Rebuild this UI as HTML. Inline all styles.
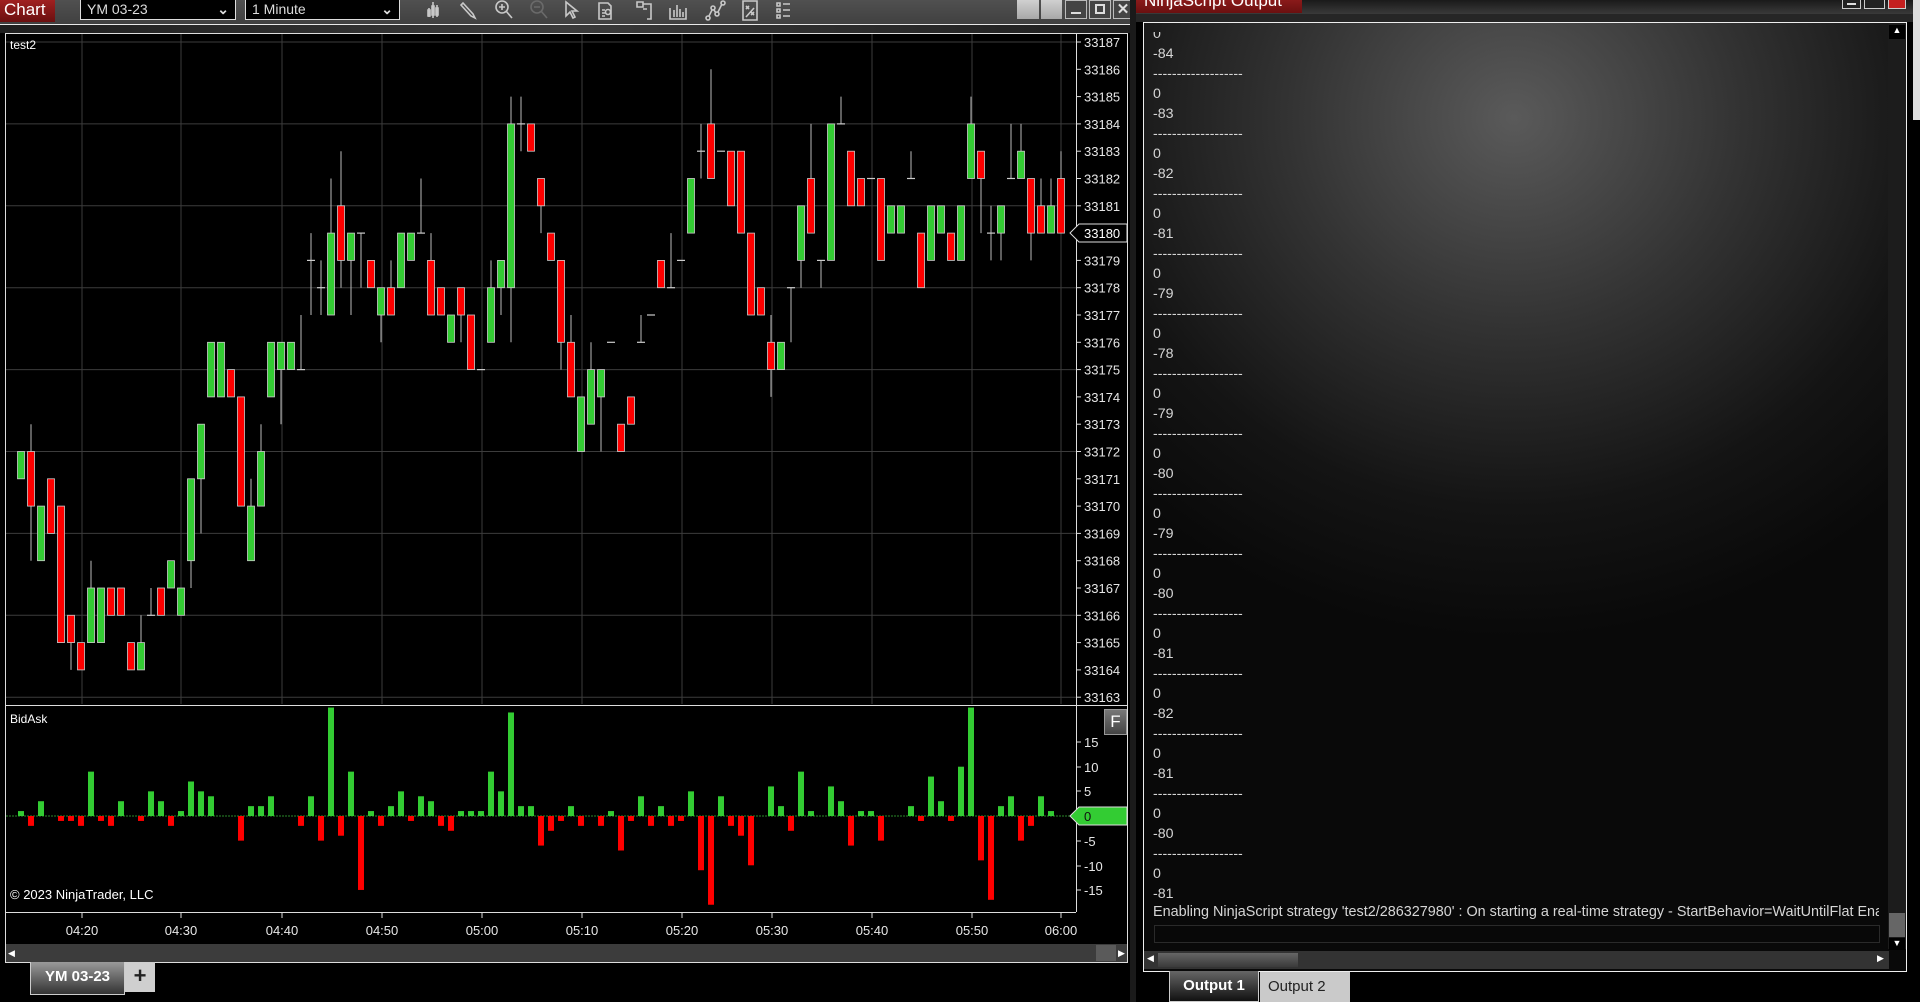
<!DOCTYPE html>
<html><head><meta charset="utf-8">
<style>
*{margin:0;padding:0;box-sizing:border-box}
body{width:1920px;height:1002px;background:#000;overflow:hidden;position:relative;font-family:"Liberation Sans",sans-serif}
.abs{position:absolute}
</style></head><body>
<!-- left toolbar -->
<div class="abs" style="left:0;top:0;width:1130px;height:24px;background:linear-gradient(#505050,#404040)"></div>
<div class="abs" style="left:0;top:24px;width:1130px;height:1px;background:#e8e8e8"></div>
<div class="abs" style="left:0;top:25px;width:1130px;height:8px;background:linear-gradient(90deg,#1e1e1e,#3a3a3a 50%,#1e1e1e)"></div>
<div class="abs" style="left:0;top:0;width:55px;height:22px;background:linear-gradient(#a02020,#6a1010);color:#fff;font-size:17px;line-height:20px;padding-left:4px">Chart</div>
<div class="abs" style="left:80px;top:0;width:156px;height:20px;background:#000;border:1px solid #ddd;border-top:none;color:#ddd;font-size:14px;line-height:18px;padding-left:6px">YM 03-23<span style="position:absolute;right:6px;top:0;font-weight:bold">&#8964;</span></div>
<div class="abs" style="left:245px;top:0;width:155px;height:20px;background:#000;border:1px solid #ddd;border-top:none;color:#ddd;font-size:14px;line-height:18px;padding-left:6px">1 Minute<span style="position:absolute;right:6px;top:0;font-weight:bold">&#8964;</span></div>
<svg class="abs" style="left:410px;top:0" width="380" height="22" viewBox="0 0 380 22" fill="none" stroke="#c8c8c8" stroke-width="1.6">
 <g transform="translate(17,0)"><path d="M2 8v9M6 2v16M10 5v12M1 10h2v6H1zM5 6h2v9H5zM9 8h2v7H9z"/></g>
 <g transform="translate(50,0)"><path d="M3 3l10 11 2 4-4-2L1 5z"/></g>
 <g transform="translate(85,0)"><circle cx="7" cy="7" r="6"/><path d="M7 4v6M4 7h6M11 11l6 7"/></g>
 <g transform="translate(120,0)" stroke="#6a6a6a"><circle cx="7" cy="7" r="6"/><path d="M4 7h6M11 11l6 7"/></g>
 <g transform="translate(153,0)"><path d="M3 2v14l4-4 3 6 2-1-3-6h5z"/></g>
 <g transform="translate(187,0)"><path d="M2 3h9l3 3v13H2zM5 10h3M5 13h3M5 16h3"/><circle cx="11" cy="12" r="2.5"/></g>
 <g transform="translate(225,0)"><path d="M2 2h6v5H2zM8 4h8v15h-4M8 9h4"/></g>
 <g transform="translate(258,0)"><path d="M2 8v11h16V8M6 17V10M9 17V5M12 17V9M15 17V12"/></g>
 <g transform="translate(295,0)"><circle cx="3" cy="18" r="2"/><circle cx="8" cy="8" r="2"/><circle cx="12" cy="14" r="2"/><circle cx="18" cy="3" r="2"/><path d="M4 16l3-6M9 10l2 3M13 12l4-8"/></g>
 <g transform="translate(330,0)"><path d="M3 1h14v19H3zM6 6l3 3M9 6l-3 3M11 12l3 3M14 12l-3 3M6 17l8-9"/></g>
 <g transform="translate(365,0)"><path d="M2 3h3v3H2zM2 9h3v3H2zM2 15h3v3H2zM8 4h10M8 10h10M8 16h10"/></g>
</svg>
<div class="abs" style="left:1017px;top:0;width:22px;height:19px;background:linear-gradient(#d0d0d0,#a8a8a8)"></div>
<div class="abs" style="left:1041px;top:0;width:21px;height:19px;background:linear-gradient(#d0d0d0,#a8a8a8)"></div>
<div class="abs" style="left:1065px;top:0;width:22px;height:19px;border:1px solid #bbb;background:#444"><div style="position:absolute;left:5px;top:11px;width:10px;height:2px;background:#ddd"></div></div>
<div class="abs" style="left:1089px;top:0;width:22px;height:19px;border:1px solid #bbb;background:#444"><div style="position:absolute;left:5px;top:3px;width:10px;height:10px;border:2px solid #ddd"></div></div>
<div class="abs" style="left:1113px;top:0;width:20px;height:19px;border:1px solid #bbb;background:#444;color:#ddd;font-weight:bold;font-size:15px;line-height:17px;text-align:center">✕</div>

<!-- chart frame -->
<div class="abs" style="left:5px;top:33px;width:1123px;height:930px;border:1px solid #ddd"></div>
<svg class="abs" style="left:0;top:0" width="1130" height="1002" id="chart" font-family="Liberation Sans, sans-serif"></svg>
<div class="abs" style="left:10px;top:38px;color:#fff;font-size:12px">test2</div>
<div class="abs" style="left:10px;top:712px;color:#fff;font-size:12px">BidAsk</div>
<div class="abs" style="left:10px;top:887px;color:#fff;font-size:13px">© 2023 NinjaTrader, LLC</div>
<div class="abs" style="left:1104px;top:709px;width:23px;height:26px;background:linear-gradient(#777,#444);border:1px solid #999;color:#fff;font-size:17px;line-height:24px;text-align:center">F</div>
<!-- horizontal scrollbar -->
<div class="abs" style="left:6px;top:944px;width:1121px;height:18px;background:#3c3c3c"></div>
<div class="abs" style="left:8px;top:948px;color:#fff;font-size:9px">&#9664;</div>
<div class="abs" style="left:1096px;top:945px;width:20px;height:16px;background:#5a5a5a"></div>
<div class="abs" style="left:1118px;top:948px;color:#fff;font-size:9px">&#9654;</div>
<!-- tabs bottom left -->
<div class="abs" style="left:30px;top:962px;width:95px;height:33px;background:linear-gradient(#9a9a9a,#333);border:1px solid #ccc;border-top:none;color:#fff;font-size:15px;font-weight:bold;line-height:30px;text-align:center">YM 03-23</div>
<div class="abs" style="left:125px;top:962px;width:30px;height:30px;background:#cfcfcf;color:#222;font-size:22px;font-weight:bold;line-height:28px;text-align:center">+</div>

<!-- right window -->
<div class="abs" style="left:1130px;top:0;width:6px;height:1002px;background:#1a1a1a"></div>
<div class="abs" style="left:1136px;top:0;width:784px;height:14px;background:linear-gradient(#1a1a1a,#3a3a3a)"></div>
<div class="abs" style="left:1136px;top:0;width:166px;height:13px;background:linear-gradient(#8a1a1a,#6a1010);overflow:hidden"><div style="color:#fff;font-size:17px;margin-top:-9px;padding-left:8px">NinjaScript Output</div></div>
<div class="abs" style="left:1842px;top:0;width:19px;height:9px;border:1px solid #ccc;border-top:none;background:#222"><div style="position:absolute;left:4px;top:3px;width:9px;height:2px;background:#ddd"></div></div>
<div class="abs" style="left:1864px;top:0;width:21px;height:9px;border:1px solid #ccc;border-top:none;background:#222"></div>
<div class="abs" style="left:1888px;top:0;width:18px;height:9px;background:#c42020;border:1px solid #ccc;border-top:none"></div>
<div class="abs" style="left:1913px;top:0;width:7px;height:120px;background:#ddd"></div>
<div class="abs" style="left:1136px;top:14px;width:777px;height:8px;background:#262626"></div>
<div class="abs" style="left:1143px;top:22px;width:764px;height:950px;border:1px solid #eee;background:radial-gradient(ellipse 560px 520px at 370px 95px,#5a5a5a 0%,#333 40%,#141414 75%,#090909 100%);overflow:hidden">
 <div style="position:absolute;left:0;top:9px;width:740px;height:870px;overflow:hidden">
 <div style="position:absolute;left:9px;top:-8px;color:#d6d6d6;font-size:14.2px;line-height:20px;white-space:pre">0
-84
-------------------
0
-83
-------------------
0
-82
-------------------
0
-81
-------------------
0
-79
-------------------
0
-78
-------------------
0
-79
-------------------
0
-80
-------------------
0
-79
-------------------
0
-80
-------------------
0
-81
-------------------
0
-82
-------------------
0
-81
-------------------
0
-80
-------------------
0
-81
</div></div>
 <div style="position:absolute;left:9px;top:881px;width:726px;overflow:hidden;white-space:nowrap;color:#d6d6d6;font-size:14.4px">Enabling NinjaScript strategy 'test2/286327980' : On starting a real-time strategy - StartBehavior=WaitUntilFlat Enabled</div>
 <div style="position:absolute;left:10px;top:902px;width:726px;height:18px;background:#080808;border:1px solid #2a2a2a"></div>
 <div style="position:absolute;left:0;top:928px;width:745px;height:18px;background:#333"></div>
 <div style="position:absolute;left:14px;top:930px;width:140px;height:14px;background:linear-gradient(#666,#3a3a3a)"></div>
 <div style="position:absolute;left:3px;top:930px;color:#fff;font-size:9px">&#9664;</div>
 <div style="position:absolute;left:733px;top:930px;color:#fff;font-size:9px">&#9654;</div>
 <div style="position:absolute;left:744px;top:0;width:18px;height:926px;background:#1c1c1c"></div>
 <div style="position:absolute;left:745px;top:2px;width:16px;height:14px;background:#000;color:#fff;font-size:9px;text-align:center">&#9650;</div>
 <div style="position:absolute;left:745px;top:890px;width:16px;height:24px;background:#666"></div>
 <div style="position:absolute;left:745px;top:915px;width:16px;height:12px;background:#000;color:#fff;font-size:9px;text-align:center">&#9660;</div>
</div>
<div class="abs" style="left:1169px;top:971px;width:90px;height:31px;background:linear-gradient(#666,#111);border:1px solid #ccc;border-top:none;color:#fff;font-weight:bold;font-size:15px;line-height:30px;text-align:center">Output 1</div>
<div class="abs" style="left:1260px;top:972px;width:90px;height:30px;background:#cacaca;color:#222;font-size:15px;line-height:30px;padding-left:8px">Output 2</div>

<script>
var D="11,12;12,10,13,8;8,10;11,9;10,5;6,5,6,4;5,4;5,7,8;5,7;7,6;7,6;5,4;4,5,6;6,6,7;7,6;7,8;6,7;8,11,11,7;11,13,13,9;14,16;14,16;15,14;14,10;8,10,11;10,12,13;14,16;15,16,16,13;15,16;15,15,17;19,19,20,17;18,18,19,17;17,20,22;21,19,23,18;19,20,20,17;20,20,20,18;19,18;17,18,18,16;18,17,19;18,20;19,20;20,20,22;19,17,20;18,17;16,17;18,17,18,16;17,15;15,15;16,18,19;18,19,19,17;18,24,25,16;24,24,25,23;24,23;22,21,22,20;20,19;19,16,19,15;16,14,17;12,14;13,15,16;14,15,15,12;16,16;13,12;14,13;16,16,17;17,17;19,18;18,18,20;19,19;20,22;23,23,24,22;24,22,26;23,23;23,21;23,20;20,17;18,17;16,15,17,14;15,16;18,18,18,16;19,21,21,18;22,20,24;19,19,19,18;19,24;24,24,25;23,21;22,21;22,22;22,19;20,21;20,21;22,22,23;20,18;19,21;20,21;20,19;19,21;22,24,25;23,22,23,20;20,20,21,19;20,21,21,19;22,22,24;22,23,24;22,20,22,19;21,20,22;20,21,22;22,20,23".split(";");
var V=[1,-2,3,0,-1,-1,-2,9,-1,-2,3,0,-1,5,3,-2,1,7,5,4,0,0,-5,2,2,4,0,0,-2,4,-5,22,-4,9,-15,1,-2,2,5,-1,4,3,-2,-3,1,1,1,9,5,21,2,2,-6,-3,-1,2,-2,0,-2,1,-7,-1,4,-2,2,-2,-1,5,-11,-18,4,-2,-4,-10,0,6,2,-3,9,1,0,6,3,-6,1,1,-5,0,0,2,-1,8,3,-1,10,22,-9,-17,2,4,-5,-2,4,1,0];
var s='';
function Y(q){return 42+(27-q)*27.3;}
for(var q=27;q>=3;q-=3){var y=Y(q);s+='<line x1="6" x2="1076" y1="'+y+'" y2="'+y+'" stroke="#3c3c3c"/>';}
var TX=[82,181,282,382,482,582,682,772,872,972,1061],TL=["04:20","04:30","04:40","04:50","05:00","05:10","05:20","05:30","05:40","05:50","06:00"];
for(var i=0;i<TX.length;i++){s+='<line x1="'+TX[i]+'" x2="'+TX[i]+'" y1="34" y2="704" stroke="#3c3c3c"/>';
 s+='<line x1="'+TX[i]+'" x2="'+TX[i]+'" y1="912" y2="918" stroke="#ddd"/>';
 s+='<text x="'+TX[i]+'" y="935" fill="#e8e8e8" font-size="13" text-anchor="middle">'+TL[i]+'</text>';}
s+='<line x1="6" x2="1127" y1="705.5" y2="705.5" stroke="#ddd"/>';
s+='<line x1="6" x2="1076" y1="912.5" y2="912.5" stroke="#ddd"/>';
s+='<line x1="1076.5" x2="1076.5" y1="34" y2="912" stroke="#ddd"/>';
for(var q=27;q>=3;q--){var y=Y(q);s+='<line x1="1076" x2="1081" y1="'+y+'" y2="'+y+'" stroke="#ddd"/><text x="1084" y="'+(y+5)+'" fill="#e6e6e6" font-size="13">'+(33160+q)+'</text>';}
for(var i=0;i<D.length;i++){var a=D[i].split(",").map(Number);var o=a[0],c=a[1],h=a.length>2?a[2]:Math.max(o,c),l=a.length>3?a[3]:Math.min(o,c);
 var x=21+10*i;
 if(h>Math.max(o,c)||l<Math.min(o,c))s+='<line x1="'+x+'" x2="'+x+'" y1="'+Y(h)+'" y2="'+Y(l)+'" stroke="#bbb"/>';
 if(o==c){s+='<line x1="'+(x-4)+'" x2="'+(x+4)+'" y1="'+Y(o)+'" y2="'+Y(o)+'" stroke="#ccc" stroke-width="1.2"/>';}
 else{var t=Y(Math.max(o,c)),b=Y(Math.min(o,c));s+='<rect x="'+(x-3.5)+'" y="'+t+'" width="7" height="'+(b-t)+'" fill="'+(c>o?'#33cc33':'#ff0000')+'" stroke="#ccc" stroke-width="0.8"/>';}}
s+='<line x1="6" x2="1076" y1="816" y2="816" stroke="#2a8a2a" stroke-dasharray="2,1"/>';
var IL=[[15,742],[10,767],[5,791],[-5,841],[-10,866],[-15,890]];
for(var k=0;k<IL.length;k++){s+='<line x1="1076" x2="1081" y1="'+IL[k][1]+'" y2="'+IL[k][1]+'" stroke="#ddd"/><text x="1084" y="'+(IL[k][1]+5)+'" fill="#e6e6e6" font-size="13">'+IL[k][0]+'</text>';}
for(var i=0;i<V.length;i++){var v=V[i];if(!v)continue;var x=21+10*i;var y1=Math.max(706,816-v*4.93);
 if(v>0)s+='<rect x="'+(x-3)+'" y="'+y1+'" width="6" height="'+(816-y1)+'" fill="#33cc33"/>';
 else s+='<rect x="'+(x-3)+'" y="816" width="6" height="'+(-v*4.93)+'" fill="#ff0000"/>';}
s+='<polygon points="1070,233 1079,224 1127,224 1127,242 1079,242" fill="#000" stroke="#ddd"/><text x="1084" y="238" fill="#fff" font-size="13">33180</text>';
s+='<polygon points="1070,816 1079,807 1127,807 1127,825 1079,825" fill="#33cc33" stroke="#ddd"/><text x="1084" y="821" fill="#111" font-size="13">0</text>';
document.getElementById('chart').innerHTML=s;
</script>
</body></html>
